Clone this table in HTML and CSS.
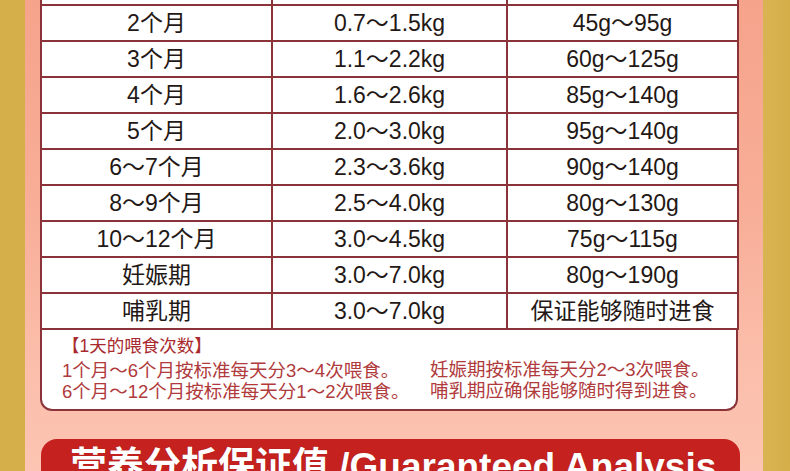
FILE: index.html
```html
<!DOCTYPE html>
<html lang="zh-CN">
<head>
<meta charset="utf-8">
<title>喂食量参考</title>
<link rel="stylesheet" href="styles.css">
</head>
<body>
<div class="page">
  <div class="gold gold-left"></div>
  <main class="content">
    <div class="sheet">
      <table class="feed">
        <tbody>
          <tr class="row-hidden"><td></td><td></td><td></td></tr>
          <tr><td>2个月</td><td>0.7～1.5kg</td><td>45g～95g</td></tr>
          <tr><td>3个月</td><td>1.1～2.2kg</td><td>60g～125g</td></tr>
          <tr><td>4个月</td><td>1.6～2.6kg</td><td>85g～140g</td></tr>
          <tr><td>5个月</td><td>2.0～3.0kg</td><td>95g～140g</td></tr>
          <tr><td>6～7个月</td><td>2.3～3.6kg</td><td>90g～140g</td></tr>
          <tr><td>8～9个月</td><td>2.5～4.0kg</td><td>80g～130g</td></tr>
          <tr><td>10～12个月</td><td>3.0～4.5kg</td><td>75g～115g</td></tr>
          <tr><td>妊娠期</td><td>3.0～7.0kg</td><td>80g～190g</td></tr>
          <tr><td>哺乳期</td><td>3.0～7.0kg</td><td>保证能够随时进食</td></tr>
        </tbody>
      </table>
      <div class="note">
        <div class="note-col note-left">
          <p class="note-title">【1天的喂食次数】</p>
          <p>1个月～6个月按标准每天分3～4次喂食。</p>
          <p>6个月～12个月按标准每天分1～2次喂食。</p>
        </div>
        <div class="note-col note-right">
          <p>妊娠期按标准每天分2～3次喂食。</p>
          <p>哺乳期应确保能够随时得到进食。</p>
        </div>
      </div>
    </div>
    <section class="analysis">
      <h2 class="analysis-title">营养分析保证值 /Guaranteed Analysis</h2>
    </section>
  </main>
  <div class="gold gold-right"></div>
</div>
</body>
</html>
```

FILE: styles.css
```css
html, body {
  margin: 0;
  padding: 0;
}
body {
  width: 790px;
  height: 471px;
  overflow: hidden;
  font-family: "Liberation Sans", "Noto Sans CJK SC", sans-serif;
}
.page {
  display: flex;
  height: 471px;
  overflow: hidden;
}
.gold {
  background: #d4af4a;
  flex: none;
}
.gold-left { width: 25px; }
.gold-right { width: 27px; background: linear-gradient(90deg, #d9b452 0, #d4ae48 100%); }
.content {
  flex: 1;
  background: linear-gradient(180deg, #f6a38b 0%, #f8ae98 45%, #fbbfac 80%, #fcc4b2 100%);
  padding: 0 0 0 15px;
  display: flex;
  flex-direction: column;
}
.sheet {
  width: 698px;
  margin-top: -32px;
}
.feed {
  width: 698px;
  border-collapse: collapse;
  table-layout: fixed;
  background: #fff;
}
.feed td {
  border: 2px solid #8a3339;
  height: 34px;
  padding: 0;
  text-align: center;
  vertical-align: middle;
  font-size: 23px;
  color: #231815;
  line-height: 34px;
  white-space: nowrap;
  overflow: hidden;
}
.feed td:nth-child(1) { width: 229px; }
.feed td:nth-child(2) { width: 233px; }
.feed td:nth-child(3) { width: 229px; }
.note {
  display: grid;
  grid-template-columns: 368px 1fr;
  background: #fff;
  border: 2px solid #8a3339;
  border-top: none;
  border-radius: 0 0 12px 12px;
  height: 79px;
  box-sizing: content-box;
  padding: 0 0 0 20px;
}
.note-col {
  padding-top: 6px;
}
.note-right {
  padding-top: 29px;
}
.note p {
  margin: 0;
  font-size: 18.5px;
  line-height: 21px;
  color: #b03a3c;
  white-space: nowrap;
}
.note .note-title {
  font-size: 17.5px;
  color: #a82a2e;
  margin-bottom: 3px;
}
.analysis {
  width: 699px;
  margin-top: 28px;
  margin-left: 1px;
  background: #c5221f;
  border-radius: 16px 16px 0 0;
  padding: 7px 0 0 29px;
  box-sizing: border-box;
  flex: none;
  height: 80px;
}
.analysis-title {
  margin: 0;
  font-size: 37px;
  line-height: 42px;
  font-weight: bold;
  color: #fff;
  white-space: nowrap;
  text-shadow: 0 0 1px rgba(120, 20, 20, 0.5);
}
```
